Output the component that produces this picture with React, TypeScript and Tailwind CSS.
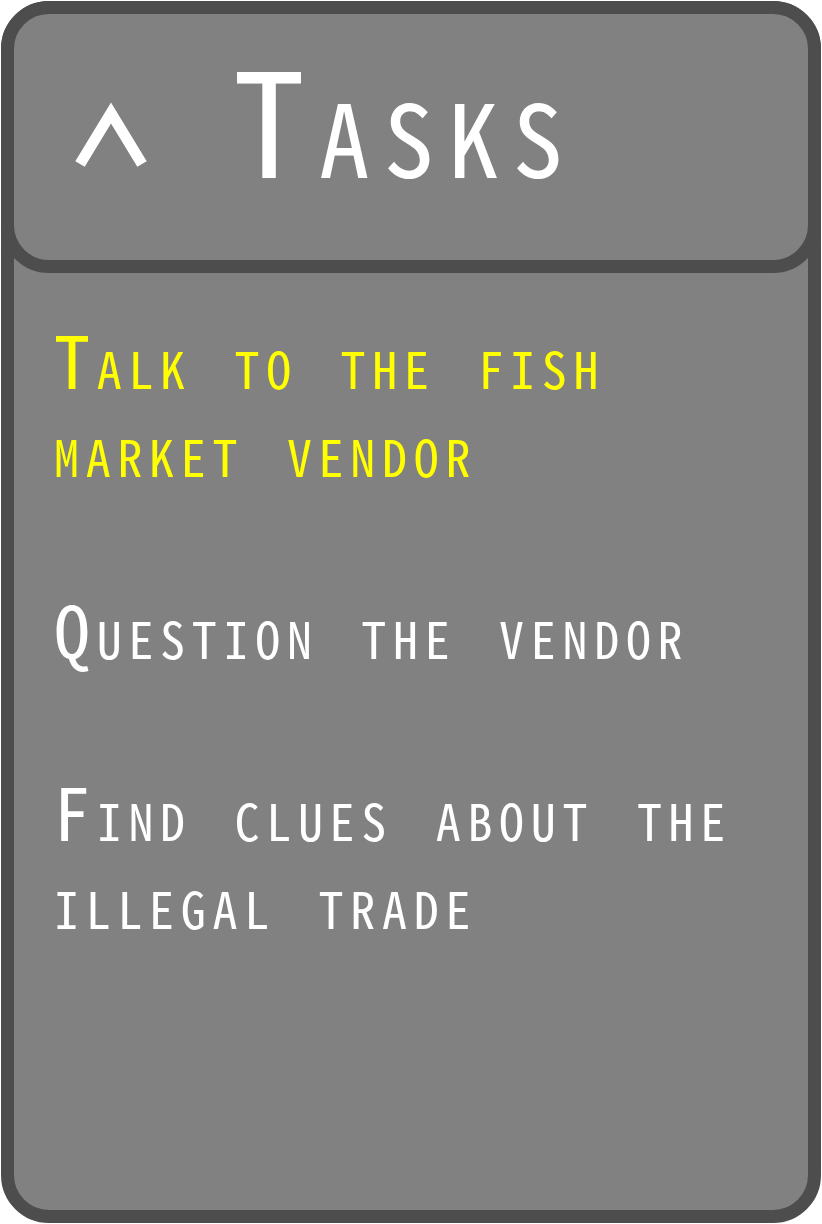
import React from 'react';

const tasks = [
  { text: 'Talk to the fish market vendor', active: true },
  { text: 'Question the vendor', active: false },
  { text: 'Find clues about the illegal trade', active: false },
];

const Caret: React.FC = () => (
  <svg width="80" height="80" viewBox="0 0 80 80" className="mt-[53px] shrink-0">
    <polyline
      points="13,68 44,17 75,68"
      fill="none"
      stroke="white"
      strokeWidth="11"
      strokeLinejoin="miter"
      strokeMiterlimit="10"
    />
  </svg>
);

export default function App() {
  return (
    <div className="min-h-screen bg-white p-px">
      <div
        className="flex h-[1222px] w-[820px] flex-col rounded-[48px] border-[13px] border-[#4d4d4d] bg-[#818181] text-white"
        style={{ fontFamily: '"Noto Sans Mono CJK SC", "DejaVu Sans Mono", monospace' }}
      >
        {/* Header */}
        <div className="-mx-[13px] -mt-[13px] flex h-[272px] items-start rounded-[48px] border-[13px] border-[#4d4d4d] bg-[#818181] pl-[53px] pt-[29px]">
          <Caret />
          <h1 className="ml-[86px] text-[144px] leading-none tracking-[14px] [font-variant:small-caps]">Tasks</h1>
        </div>

        {/* Task list */}
        <ul className="flex flex-col gap-[94px] pl-10 pr-10 pt-[41px]">
          {tasks.map((t) => (
            <li
              key={t.text}
              className={`text-[72px] leading-[88px] tracking-[6.7px] [font-variant:small-caps] ${
                t.active ? 'text-[#ffff00]' : 'text-white'
              }`}
            >
              {t.text}
            </li>
          ))}
        </ul>
      </div>
    </div>
  );
}
